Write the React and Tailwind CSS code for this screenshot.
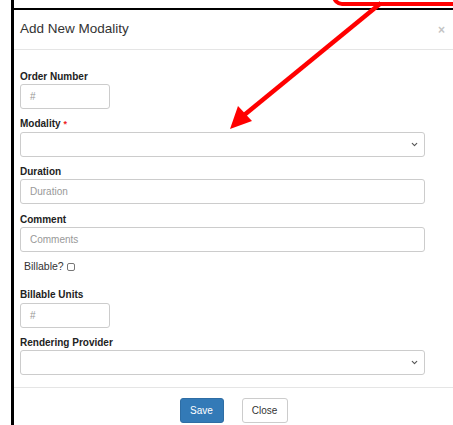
import { ChevronDown } from "lucide-react";

const font = { fontFamily: '"Liberation Sans", Arial, sans-serif' };

function Label({ children, required, className = "" }) {
  return (
    <div className={`h-[12px] text-[10px] leading-[12px] font-bold text-[#222] ${className}`}>
      {children}
      {required && <span className="ml-[3px] text-[9px] align-top font-bold text-[#e22]">*</span>}
    </div>
  );
}

function TextBox({ placeholder, wide }) {
  return (
    <div
      className={`h-[25px] ${wide ? "w-[405px]" : "w-[90px]"} flex items-center rounded-[3px] border border-[#ccc] bg-white pl-[9px] text-[10px] text-[#999]`}
    >
      {placeholder}
    </div>
  );
}

function SelectBox() {
  return (
    <div className="h-[25px] w-[405px] flex items-center justify-end rounded-[3px] border border-[#ccc] bg-white pr-[5px]">
      <ChevronDown size={9} strokeWidth={3} className="text-[#555]" />
    </div>
  );
}

export default function App() {
  return (
    <div className="relative h-[425px] w-[453px] overflow-hidden bg-white" style={font}>
      {/* page frame behind the dialog */}
      <div className="ml-[11px] h-full border-l-[3px] border-black pt-[8px]">
        <div className="h-full border-t-[2px] border-black">
          {/* header */}
          <div className="flex h-[40px] items-center justify-between border-b border-[#e5e5e5] pl-[6px] pr-[8px]">
            <span className="text-[13.5px] text-[#333]">Add New Modality</span>
            <span className="text-[12px] font-bold leading-none text-[#c4c4c4]">×</span>
          </div>

          {/* body */}
          <div className="pl-[6px] pt-[21px]">
            <Label className="mb-[1px]">Order Number</Label>
            <TextBox placeholder="#" />

            <Label required className="mt-[9px] mb-[2px]">Modality</Label>
            <SelectBox />

            <Label className="mt-[9px] mb-[1px]">Duration</Label>
            <TextBox placeholder="Duration" wide />

            <Label className="mt-[10px] mb-[1px]">Comment</Label>
            <TextBox placeholder="Comments" wide />

            <div className="mt-[9px] flex h-[12px] items-center pl-[4px] text-[10.5px] text-[#333]">
              Billable?
              <span className="ml-[3px] h-[8px] w-[8px] rounded-[2px] border border-[#777] bg-white" />
            </div>

            <Label className="mt-[16px] mb-[2px]">Billable Units</Label>
            <TextBox placeholder="#" />

            <Label className="mt-[9px] mb-[1px]">Rendering Provider</Label>
            <SelectBox />
          </div>

          {/* footer */}
          <div className="mt-[12px] flex justify-center gap-[18px] border-t border-[#e5e5e5] pt-[10px]">
            <button className="h-[25px] w-[44px] rounded-[3px] border border-[#2e6da4] bg-[#337ab7] text-[10px] text-white">
              Save
            </button>
            <button className="h-[25px] w-[46px] rounded-[3px] border border-[#ccc] bg-white text-[10px] text-[#333]">
              Close
            </button>
          </div>
        </div>
      </div>

      {/* red callout box */}
      <div className="absolute left-[332px] top-[-30px] h-[36px] w-[140px] rounded-[10px] border-[4px] border-[#ff0000]" />

      {/* red arrow */}
      <svg className="pointer-events-none absolute left-0 top-0" width="453" height="425">
        <line x1="381" y1="3" x2="243" y2="116" stroke="#ff0000" strokeWidth="4.5" />
        <polygon points="230,129 252,121 238,106" fill="#ff0000" />
      </svg>
    </div>
  );
}
